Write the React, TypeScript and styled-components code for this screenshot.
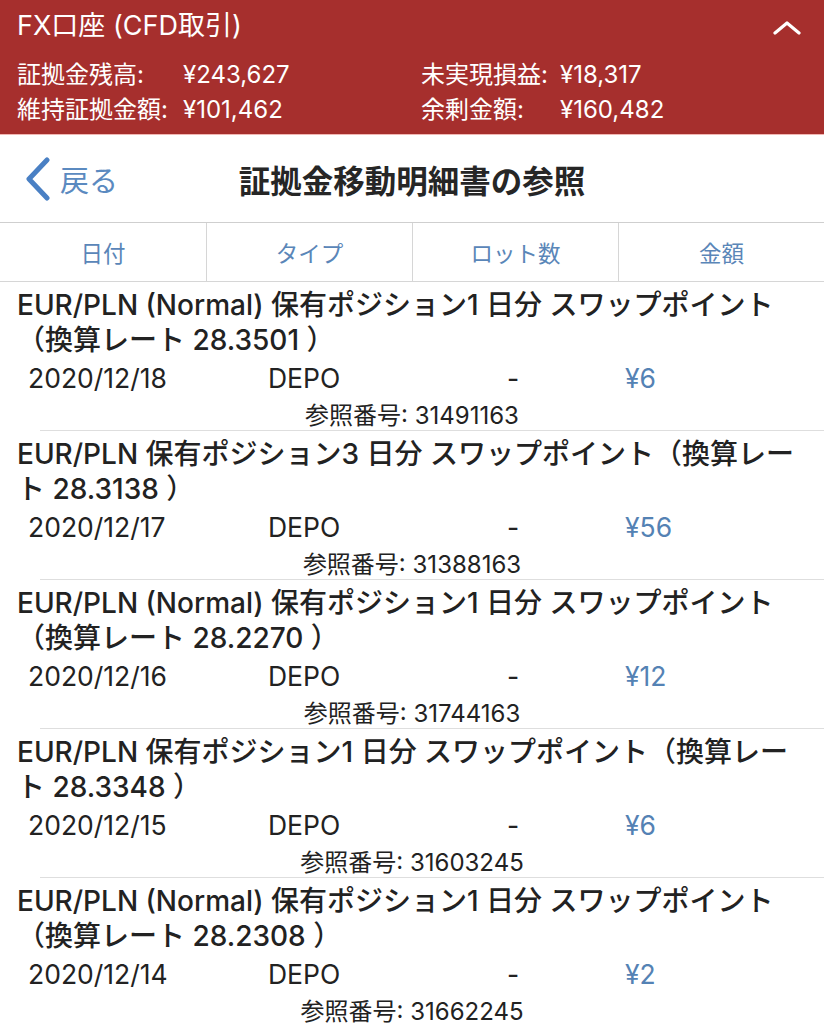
import { Fragment } from "react";
import styled, { createGlobalStyle } from "styled-components";

const GlobalStyle = createGlobalStyle`
  html, body {
    margin: 0;
    padding: 0;
    overflow: hidden;
    background: #ffffff;
  }
  body {
    font-family: Inter, "Noto Sans CJK JP", sans-serif;
    color: #222222;
  }
`;

const Page = styled.div`
  width: 824px;
  min-height: 1024px;
  background: #ffffff;
`;

const AccountHeader = styled.header`
  background: #a62f2d;
  color: #ffffff;
  padding: 0 17px 7px;
  border-bottom: 1px solid #f1b7b3;
`;

const AccountTitleRow = styled.div`
  height: 54px;
  padding-bottom: 8px;
  box-sizing: border-box;
  display: flex;
  align-items: center;
  justify-content: space-between;
`;

const AccountTitle = styled.h1`
  margin: 0;
  font-size: 27px;
  font-weight: 400;
`;

const CollapseIcon = styled.svg`
  margin: 10px 6px 0 0;
`;

const Summary = styled.div`
  display: grid;
  grid-template-columns: 166px 238px 139px 1fr;
  padding-top: 3px;
  font-size: 24px;
  line-height: 35px;
`;

const NavBar = styled.nav`
  height: 87px;
  display: grid;
  grid-template-columns: 1fr auto 1fr;
  align-items: center;
`;

const BackButton = styled.a`
  display: flex;
  align-items: center;
  gap: 9px;
  padding-left: 25px;
  color: #5b8ac0;
  font-size: 29px;
  text-decoration: none;
`;

const NavTitle = styled.h2`
  margin: 0;
  font-size: 31.5px;
  font-weight: 700;
  color: #262626;
`;

const TableHead = styled.div`
  display: grid;
  grid-template-columns: repeat(4, 1fr);
  height: 58px;
  border-top: 1px solid #cfcfcf;
  border-bottom: 1px solid #d6d6d6;
`;

const HeadCell = styled.div<{ $first?: boolean }>`
  display: flex;
  align-items: center;
  justify-content: center;
  font-size: 22.5px;
  color: #5a86b8;
  border-left: ${(p) => (p.$first ? "none" : "1px solid #d6d6d6")};
`;

const Entry = styled.div`
  padding-top: 6px;

  &::after {
    content: "";
    display: block;
    height: 1px;
    margin-left: 40px;
    background: #dedede;
  }
`;

const EntryTitle = styled.div`
  padding: 0 4px 0 17px;
  font-size: 28px;
  font-weight: 500;
  line-height: 35px;
  white-space: nowrap;
  color: #222222;
`;

const EntryData = styled.div`
  display: grid;
  grid-template-columns: 240px 239px 118px 1fr;
  padding-left: 28px;
  font-size: 26.5px;
  line-height: 40px;
`;

const Amount = styled.span`
  color: #5482b4;
`;

const Reference = styled.div`
  padding-top: 3px;
  text-align: center;
  font-size: 24px;
  line-height: 29px;
`;

// title lines are split where the app wraps them
const entries = [
  {
    title: ["EUR/PLN (Normal) 保有ポジション1 日分 スワップポイント", "（換算レート 28.3501 ）"],
    date: "2020/12/18",
    amount: "¥6",
    ref: "31491163",
  },
  {
    title: ["EUR/PLN 保有ポジション3 日分 スワップポイント（換算レー", "ト 28.3138 ）"],
    date: "2020/12/17",
    amount: "¥56",
    ref: "31388163",
  },
  {
    title: ["EUR/PLN (Normal) 保有ポジション1 日分 スワップポイント", "（換算レート 28.2270 ）"],
    date: "2020/12/16",
    amount: "¥12",
    ref: "31744163",
  },
  {
    title: ["EUR/PLN 保有ポジション1 日分 スワップポイント（換算レー", "ト 28.3348 ）"],
    date: "2020/12/15",
    amount: "¥6",
    ref: "31603245",
  },
  {
    title: ["EUR/PLN (Normal) 保有ポジション1 日分 スワップポイント", "（換算レート 28.2308 ）"],
    date: "2020/12/14",
    amount: "¥2",
    ref: "31662245",
  },
];

export default function App() {
  return (
    <Page>
      <GlobalStyle />
      <AccountHeader>
        <AccountTitleRow>
          <AccountTitle>FX口座 (CFD取引)</AccountTitle>
          <CollapseIcon width="28" height="14" viewBox="0 0 28 14">
            <path
              d="M2 12 L14 2 L26 12"
              fill="none"
              stroke="#ffffff"
              strokeWidth="3.2"
              strokeLinecap="round"
              strokeLinejoin="round"
            />
          </CollapseIcon>
        </AccountTitleRow>
        <Summary>
          <span>証拠金残高:</span>
          <span>¥243,627</span>
          <span>未実現損益:</span>
          <span>¥18,317</span>
          <span>維持証拠金額:</span>
          <span>¥101,462</span>
          <span>余剰金額:</span>
          <span>¥160,482</span>
        </Summary>
      </AccountHeader>

      <NavBar>
        <BackButton href="#">
          <svg width="26" height="44" viewBox="0 0 26 44">
            <path
              d="M22 3 L4 22 L22 41"
              fill="none"
              stroke="#4a80c4"
              strokeWidth="5"
              strokeLinecap="round"
              strokeLinejoin="round"
            />
          </svg>
          戻る
        </BackButton>
        <NavTitle>証拠金移動明細書の参照</NavTitle>
        <span />
      </NavBar>

      <TableHead>
        <HeadCell $first>日付</HeadCell>
        <HeadCell>タイプ</HeadCell>
        <HeadCell>ロット数</HeadCell>
        <HeadCell>金額</HeadCell>
      </TableHead>

      {entries.map((e) => (
        <Entry key={e.ref}>
          <EntryTitle>
            {e.title.map((line, i) => (
              <Fragment key={i}>
                {i > 0 && <br />}
                {line}
              </Fragment>
            ))}
          </EntryTitle>
          <EntryData>
            <span>{e.date}</span>
            <span>DEPO</span>
            <span>-</span>
            <Amount>{e.amount}</Amount>
          </EntryData>
          <Reference>参照番号: {e.ref}</Reference>
        </Entry>
      ))}
    </Page>
  );
}
